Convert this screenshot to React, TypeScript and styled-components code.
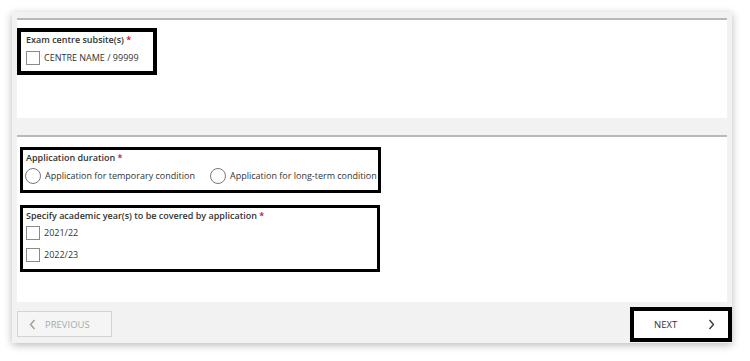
import React from "react";
import styled, { createGlobalStyle } from "styled-components";

const Global = createGlobalStyle`
  html, body { margin: 0; padding: 0; background: #ffffff; }
  body { font-family: "Open Sans", "Liberation Sans", sans-serif; color: #333; }
`;

const Page = styled.div`
  padding: 12px;
  width: 720px;
`;

const Card = styled.div`
  background: #f2f2f2;
  width: 720px;
  height: 331px;
  box-sizing: border-box;
  padding: 6px 5px 0 5px;
  box-shadow: 0 2px 8px rgba(0, 0, 0, 0.28);
  display: flex;
  flex-direction: column;
`;

const Section = styled.div<{ $height: number; $top: number; $padTop: number }>`
  background: #fff;
  border-top: 2px solid #bdb8b8;
  height: ${(p) => p.$height}px;
  margin-top: ${(p) => p.$top}px;
  padding-top: ${(p) => p.$padTop}px;
  box-sizing: border-box;
  display: flex;
  flex-direction: column;
  align-items: flex-start;
  gap: 12px;
  flex: none;
`;

const Field = styled.div<{ $left: number; $width: number; $height: number; $border: number; $padLeft: number }>`
  margin-left: ${(p) => p.$left}px;
  width: ${(p) => p.$width}px;
  height: ${(p) => p.$height}px;
  box-sizing: border-box;
  border: ${(p) => p.$border}px solid #000;
  padding: 1px 4px 0 ${(p) => p.$padLeft}px;
  display: flex;
  flex-direction: column;
`;

const Label = styled.div<{ $indent?: number }>`
  font-size: 9px;
  font-weight: 600;
  color: #333;
  line-height: 13px;
  white-space: nowrap;
  padding-left: ${(p) => p.$indent ?? 0}px;
`;

const Req = styled.span`
  color: #d0021b;
`;

const OptionRow = styled.div<{ $gap: number }>`
  display: flex;
  align-items: center;
  gap: ${(p) => p.$gap}px;
  margin-top: 4px;
`;

const Option = styled.label<{ $mt?: number }>`
  display: flex;
  align-items: center;
  gap: 4px;
  font-size: 9px;
  line-height: 12px;
  color: #333;
  white-space: nowrap;
  margin-top: ${(p) => p.$mt ?? 0}px;
`;

const Box = styled.span`
  width: 14px;
  height: 14px;
  box-sizing: border-box;
  border: 1px solid #8a8a8a;
  background: #fff;
  display: inline-block;
  flex: none;
`;

const Radio = styled.span`
  width: 16px;
  height: 16px;
  box-sizing: border-box;
  border: 1px solid #777;
  border-radius: 50%;
  background: #fff;
  display: inline-block;
  flex: none;
`;

const Footer = styled.div`
  flex: 1;
  display: flex;
  justify-content: space-between;
  align-items: flex-start;
  padding-top: 9px;
`;

const NavButton = styled.button<{ $primary?: boolean }>`
  width: ${(p) => (p.$primary ? 102 : 95)}px;
  height: ${(p) => (p.$primary ? 35 : 26)}px;
  margin-top: ${(p) => (p.$primary ? -4 : 0)}px;
  margin-right: ${(p) => (p.$primary ? -5 : 0)}px;
  box-sizing: border-box;
  border: ${(p) => (p.$primary ? "4px solid #000" : "1px solid #d4d4d4")};
  background: ${(p) => (p.$primary ? "#fff" : "#f5f5f5")};
  color: ${(p) => (p.$primary ? "#333" : "#aaa")};
  font-family: "Open Sans", "Liberation Sans", sans-serif;
  font-size: 9.5px;
  display: flex;
  align-items: center;
  padding: ${(p) => (p.$primary ? "0 13px 0 20px" : "0 0 0 11px")};
  justify-content: ${(p) => (p.$primary ? "space-between" : "flex-start")};
  gap: 9px;
`;

const Chevron = ({ dir, color }: { dir: "left" | "right"; color: string }) => (
  <svg width="7" height="11" viewBox="0 0 7 11" fill="none">
    <path
      d={dir === "left" ? "M5.5 1 L1.5 5.5 L5.5 10" : "M1.5 1 L5.5 5.5 L1.5 10"}
      stroke={color}
      strokeWidth="1.3"
    />
  </svg>
);

export default function App() {
  return (
    <>
      <Global />
      <Page>
        <Card>
          <Section $height={100} $top={0} $padTop={8}>
            <Field $left={0} $width={140} $height={47} $border={4} $padLeft={5}>
              <Label>
                Exam centre subsite(s) <Req>*</Req>
              </Label>
              <Option $mt={5}>
                <Box />
                CENTRE NAME / 99999
              </Option>
            </Field>
          </Section>
          <Section $height={167} $top={17} $padTop={10}>
            <Field $left={3} $width={361} $height={46} $border={3} $padLeft={2}>
              <Label $indent={1}>
                Application duration <Req>*</Req>
              </Label>
              <OptionRow $gap={15}>
                <Option>
                  <Radio />
                  Application for temporary condition
                </Option>
                <Option>
                  <Radio />
                  Application for long-term condition
                </Option>
              </OptionRow>
            </Field>
            <Field $left={3} $width={360} $height={67} $border={3} $padLeft={3}>
              <Label>
                Specify academic year(s) to be covered by application <Req>*</Req>
              </Label>
              <Option $mt={4}>
                <Box />
                2021/22
              </Option>
              <Option $mt={8}>
                <Box />
                2022/23
              </Option>
            </Field>
          </Section>
          <Footer>
            <NavButton>
              <Chevron dir="left" color="#999" />
              PREVIOUS
            </NavButton>
            <NavButton $primary>
              NEXT
              <Chevron dir="right" color="#333" />
            </NavButton>
          </Footer>
        </Card>
      </Page>
    </>
  );
}
